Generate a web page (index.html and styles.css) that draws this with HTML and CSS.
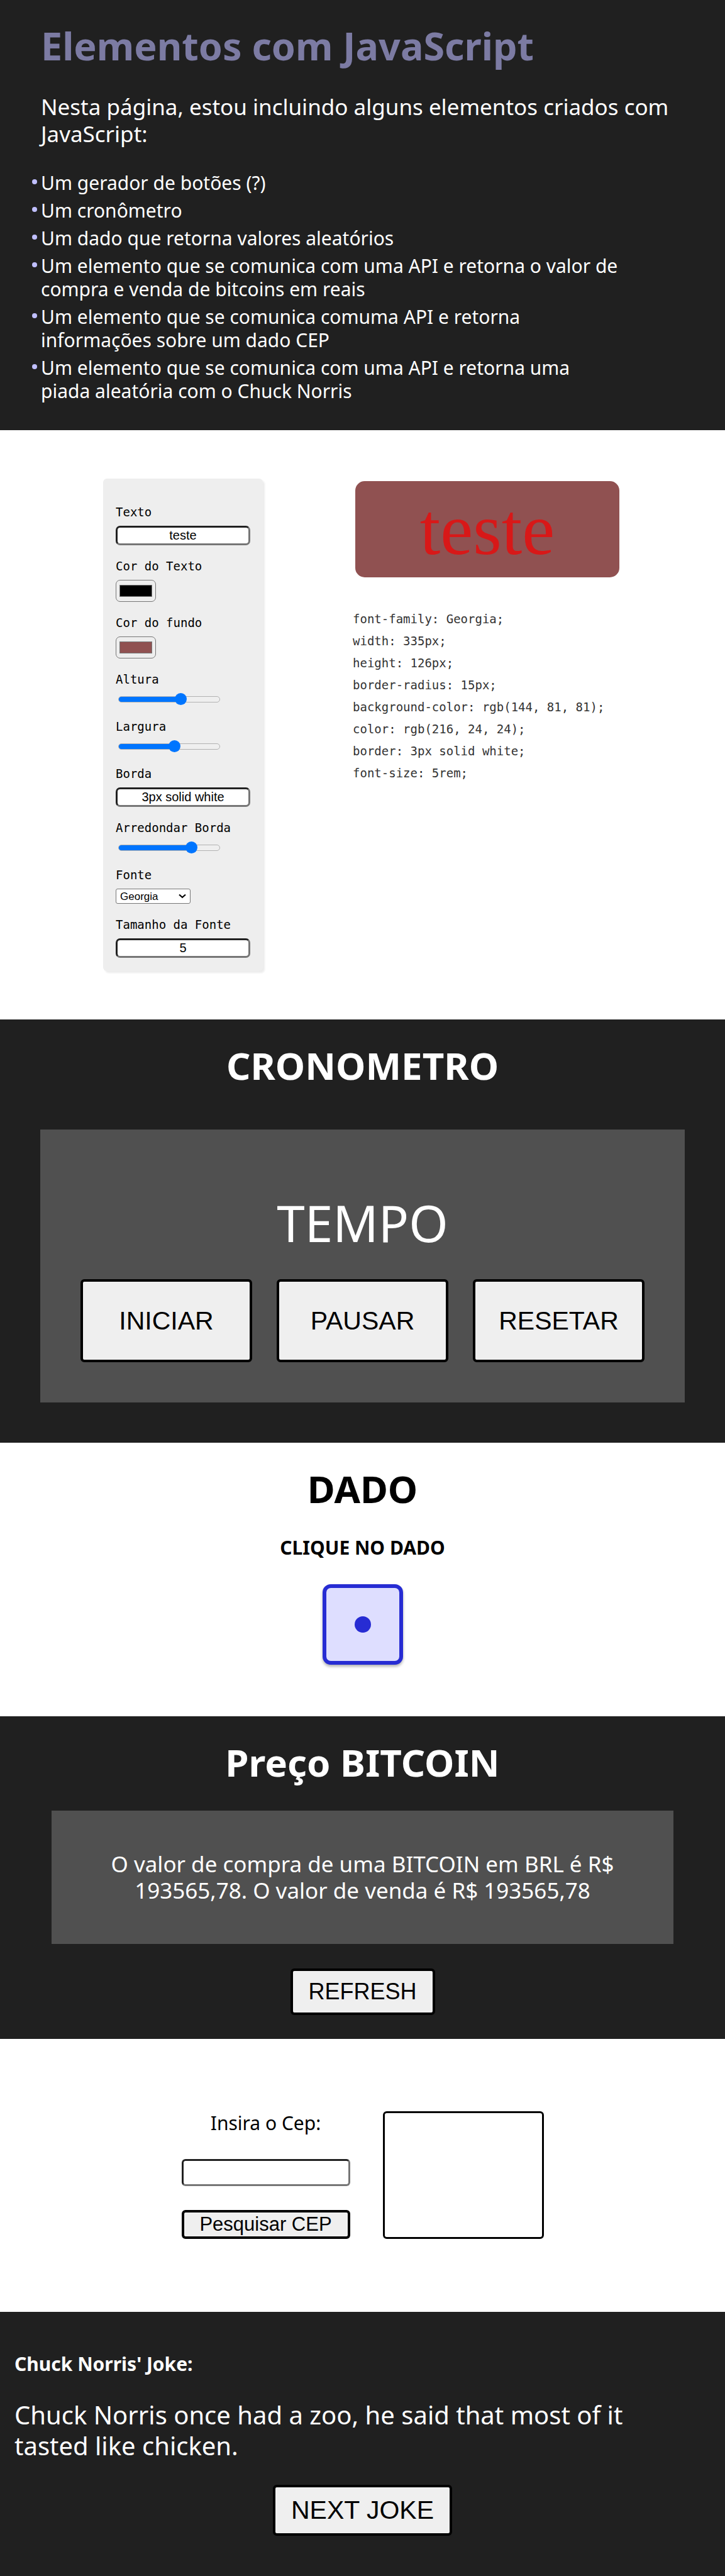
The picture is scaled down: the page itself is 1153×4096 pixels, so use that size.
FILE: index.html
```html
<!DOCTYPE html>
<html lang="pt-BR">
<head>
<meta charset="utf-8">
<meta name="viewport" content="width=device-width, initial-scale=1">
<title>Elementos com JavaScript</title>
<link rel="stylesheet" href="styles.css">
</head>
<body>
<header class="intro">
  <h1 class="title intro-title">Elementos com JavaScript</h1>
  <p class="lead">Nesta página, estou incluindo alguns elementos criados com JavaScript:</p>
  <ul class="features">
    <li>Um gerador de botões (?)</li>
    <li>Um cronômetro</li>
    <li>Um dado que retorna valores aleatórios</li>
    <li>Um elemento que se comunica com uma API e retorna o valor de compra e venda de bitcoins em reais</li>
    <li>Um elemento que se comunica comuma API e retorna informações sobre um dado CEP</li>
    <li>Um elemento que se comunica com uma API e retorna uma piada aleatória com o Chuck Norris</li>
  </ul>
</header>

<main>
  <section class="generator">
    <form class="controls">
      <div class="field">
        <label for="texto">Texto</label>
        <input class="text-input" type="text" id="texto" value="teste">
      </div>
      <div class="field">
        <label for="cor">Cor do Texto</label>
        <input class="color-input" type="color" id="cor" value="#000000">
      </div>
      <div class="field">
        <label for="fundo">Cor do fundo</label>
        <input class="color-input" type="color" id="fundo" value="#905151">
      </div>
      <div class="field">
        <label for="altura">Altura</label>
        <input class="slider" type="range" id="altura" min="0" max="100" value="63" style="--value: 63%">
      </div>
      <div class="field">
        <label for="largura">Largura</label>
        <input class="slider" type="range" id="largura" min="0" max="100" value="56" style="--value: 56%">
      </div>
      <div class="field">
        <label for="borda">Borda</label>
        <input class="text-input" type="text" id="borda" value="3px solid white">
      </div>
      <div class="field">
        <label for="raio">Arredondar Borda</label>
        <input class="slider" type="range" id="raio" min="0" max="100" value="75" style="--value: 75%">
      </div>
      <div class="field">
        <label for="fonte">Fonte</label>
        <span class="select-wrap">
          <select id="fonte">
            <option selected>Georgia</option>
            <option>Arial</option>
            <option>Courier New</option>
          </select>
          <svg class="chevron" viewBox="0 0 12 8" aria-hidden="true"><path d="M1 1.500 6 5.800 11 1.500" fill="none" stroke="#000" stroke-width="2.200"/></svg>
        </span>
      </div>
      <div class="field">
        <label for="tamanho">Tamanho da Fonte</label>
        <input class="text-input" type="number" id="tamanho" value="5">
      </div>
    </form>
    <div class="preview">
      <button class="preview-button" type="button">teste</button>
      <pre class="code">font-family: Georgia;
width: 335px;
height: 126px;
border-radius: 15px;
background-color: rgb(144, 81, 81);
color: rgb(216, 24, 24);
border: 3px solid white;
font-size: 5rem;</pre>
    </div>
  </section>

  <section class="dark timer">
    <h2 class="title">CRONOMETRO</h2>
    <div class="timer-panel">
      <p class="time">TEMPO</p>
      <div class="timer-buttons">
        <button class="button" type="button">INICIAR</button>
        <button class="button" type="button">PAUSAR</button>
        <button class="button" type="button">RESETAR</button>
      </div>
    </div>
  </section>

  <section class="dice">
    <h2 class="title">DADO</h2>
    <h3 class="subtitle">CLIQUE NO DADO</h3>
    <button class="die" type="button" aria-label="Dado"><span class="pip"></span></button>
  </section>

  <section class="dark bitcoin">
    <h2 class="title">Preço BITCOIN</h2>
    <p class="price">O valor de compra de uma BITCOIN em BRL é R$ 193565,78. O valor de venda é R$ 193565,78</p>
    <button class="button refresh" type="button">REFRESH</button>
  </section>

  <section class="cep">
    <form class="cep-form">
      <label for="cep">Insira o Cep:</label>
      <input class="cep-input" type="text" id="cep">
      <button class="button search" type="button">Pesquisar CEP</button>
    </form>
    <div class="cep-result"></div>
  </section>

  <section class="dark joke">
    <h3 class="subtitle">Chuck Norris' Joke:</h3>
    <p class="joke-text">Chuck Norris once had a zoo, he said that most of it tasted like chicken.</p>
    <button class="button next" type="button">NEXT JOKE</button>
  </section>
</main>
</body>
</html>
```
FILE: styles.css
```css
* {
  box-sizing: border-box;
}

body,
h1,
h2,
h3,
p,
ul,
pre {
  margin: 0;
  padding: 0;
}

body {
  background: #fff;
  color: #000;
  font-family: "Noto Sans", sans-serif;
}

button,
input,
select {
  margin: 0;
  font-family: "Liberation Sans", Arial, sans-serif;
  color: #000;
}

.title {
  font-size: 60px;
  line-height: 76px;
  font-weight: 700;
}

.subtitle {
  font-size: 30px;
  line-height: 40px;
  font-weight: 700;
}

.dark,
.intro {
  background: #202020;
  color: #fff;
}

.button {
  padding: 0;
  border: 4px solid #000;
  border-radius: 6px;
  background: #efefef;
}

/* Introduction */
.intro {
  padding: 35px 65px 44px;
}

.intro-title {
  color: #7c7ba3;
  font-size: 61px;
}

.lead {
  margin-top: 37px;
  font-size: 35px;
  line-height: 43px;
}

.features {
  display: grid;
  gap: 7px;
  max-width: 922px;
  margin-top: 38px;
  font-size: 30px;
  line-height: 37px;
  list-style: none;
}

.features li {
  position: relative;
}

.features li::before {
  content: "";
  position: absolute;
  top: 13px;
  left: -14px;
  width: 8px;
  height: 8px;
  border-radius: 50%;
  background: #c0bfff;
}

/* Button generator */
.generator {
  display: flex;
  justify-content: center;
  align-items: flex-start;
  gap: 143px;
  padding: 77px 0;
}

.controls {
  display: grid;
  gap: 21px;
  width: 254px;
  padding: 41px 20px 21px;
  border-radius: 6px;
  background: #eee;
  box-shadow: 3px 3px 3px rgba(0, 0, 0, 0.08);
}

.field {
  display: flex;
  flex-direction: column;
  align-items: flex-start;
  gap: 10px;
}

.field label,
.code {
  font-family: "DejaVu Sans Mono", monospace;
  font-size: 19px;
}

.field label {
  line-height: 24px;
}

.text-input {
  width: 100%;
  height: 31px;
  padding: 0;
  border: 3px inset #767676;
  border-radius: 7px;
  background: #fff;
  font-size: 20px;
  text-align: center;
  appearance: textfield;
}

.text-input::-webkit-inner-spin-button {
  appearance: none;
  margin: 0;
}

.color-input {
  appearance: none;
  width: 64px;
  height: 35px;
  padding: 0;
  border: 1px solid #767676;
  border-radius: 7px;
  background: transparent;
}

.color-input::-webkit-color-swatch-wrapper {
  padding: 7px 5px;
}

.color-input::-webkit-color-swatch {
  border: 1px solid #777;
  border-radius: 0;
}

.slider {
  appearance: none;
  width: 162px;
  height: 20px;
  margin: 0 4px;
  background: transparent;
}

.slider::-webkit-slider-runnable-track {
  height: 10px;
  border: 1px solid #b2b2b2;
  border-radius: 5px;
  background: linear-gradient(to right, #0075ff var(--value), #efefef var(--value));
}

.slider::-webkit-slider-thumb {
  appearance: none;
  width: 19px;
  height: 19px;
  margin-top: -6px;
  border-radius: 50%;
  background: #0075ff;
}

.select-wrap {
  position: relative;
  display: flex;
  width: 119px;
}

.select-wrap select {
  appearance: none;
  width: 100%;
  height: 24px;
  padding: 0 6px;
  border: 1px solid #767676;
  border-radius: 3px;
  background: #fff;
  font-size: 17px;
}

.chevron {
  position: absolute;
  top: 8px;
  right: 7px;
  width: 12px;
  height: 8px;
  pointer-events: none;
}

.preview {
  width: 428px;
}

.preview-button {
  display: block;
  width: 100%;
  height: 161px;
  padding: 0;
  border: 4px solid #fff;
  border-radius: 19px;
  background: #905151;
  color: #d81818;
  font-family: "Liberation Serif", serif;
  font-size: 117px;
  line-height: 120px;
}

.code {
  margin-top: 45px;
  color: #333;
  line-height: 35px;
}

/* Timer */
.timer {
  padding: 35px 64px 64px;
  text-align: center;
}

.timer-panel {
  margin-top: 64px;
  padding: 98px 64px 64px;
  background: #505050;
}

.time {
  font-size: 80px;
  line-height: 100px;
}

.timer-buttons {
  display: grid;
  grid-template-columns: repeat(3, 1fr);
  gap: 39px;
  margin-top: 40px;
}

.timer-buttons .button {
  height: 132px;
  font-size: 41px;
}

/* Dice */
.dice {
  display: flex;
  flex-direction: column;
  align-items: center;
  padding: 35px 0 82px;
}

.dice .subtitle {
  margin-top: 36px;
}

.die {
  display: grid;
  place-items: center;
  width: 128px;
  height: 128px;
  margin-top: 38px;
  padding: 0;
  border: 6px solid #272cd3;
  border-radius: 13px;
  background: #dedeff;
  box-shadow: 0 3px 4px rgba(0, 0, 0, 0.3);
}

.pip {
  width: 26px;
  height: 26px;
  border-radius: 50%;
  background: #272cd3;
}

/* Bitcoin price */
.bitcoin {
  display: flex;
  flex-direction: column;
  align-items: center;
  padding: 35px 82px 38px;
  text-align: center;
}

.price {
  align-self: stretch;
  margin-top: 39px;
  padding: 64px;
  background: #505050;
  font-size: 35px;
  line-height: 42px;
}

.refresh {
  width: 230px;
  height: 74px;
  margin-top: 39px;
  font-size: 36px;
}

/* CEP lookup */
.cep {
  display: flex;
  justify-content: center;
  gap: 52px;
  padding: 115px 0 116px;
}

.cep-form {
  display: flex;
  flex-direction: column;
  justify-content: space-between;
  width: 268px;
  font-size: 30px;
  line-height: 38px;
  text-align: center;
}

.cep-input {
  height: 43px;
  border: 3px inset #767676;
  border-radius: 6px;
  background: #fff;
  font-size: 30px;
}

.search {
  height: 46px;
  font-size: 31px;
}

.cep-result {
  width: 256px;
  height: 203px;
  border: 3px solid #000;
  border-radius: 6px;
}

/* Joke */
.joke {
  display: flex;
  flex-direction: column;
  align-items: flex-start;
  padding: 63px 23px 64px;
}

.joke-text {
  max-width: 1040px;
  margin-top: 36px;
  font-size: 40px;
  line-height: 49px;
}

.next {
  align-self: center;
  width: 285px;
  height: 81px;
  margin-top: 38px;
  font-size: 41px;
}
```
